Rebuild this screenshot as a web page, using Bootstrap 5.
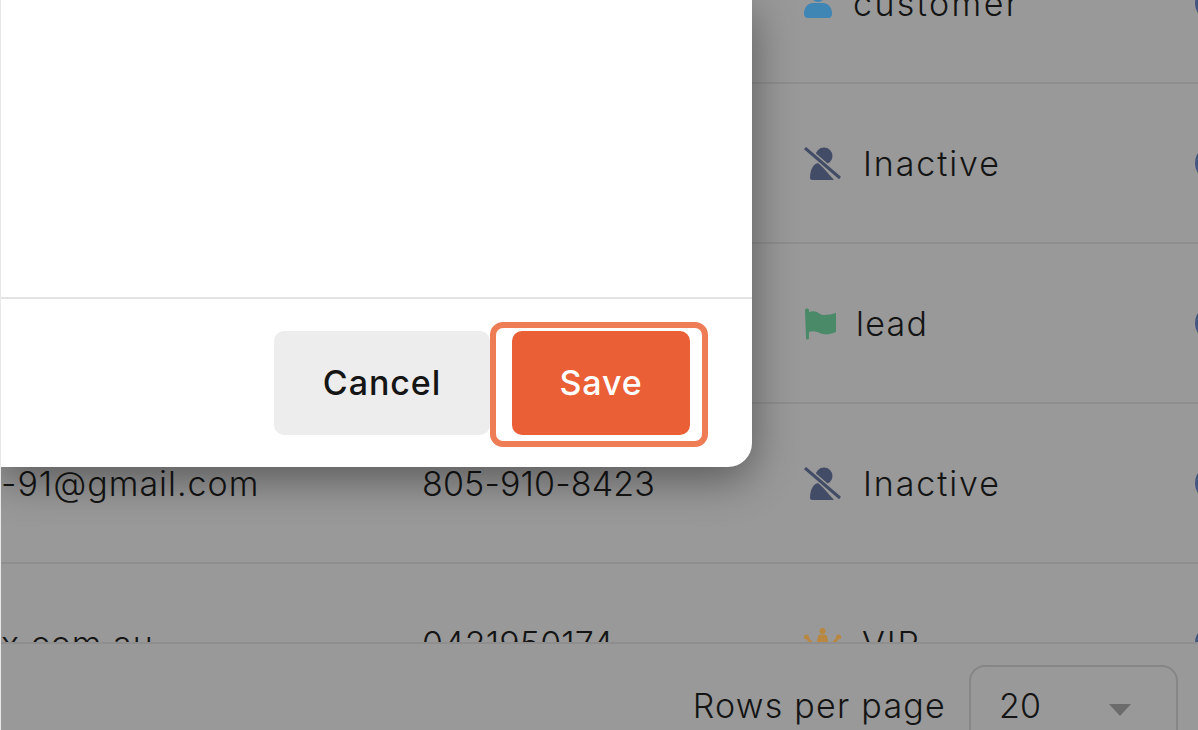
<!DOCTYPE html>
<html lang="en">
<head>
    <meta charset="UTF-8">
    <meta name="viewport" content="width=device-width, initial-scale=1.0">
    <title>Customers</title>
    <link href="https://cdn.jsdelivr.net/npm/bootstrap@5.3.0/dist/css/bootstrap.min.css" rel="stylesheet">
    <style>
        html, body { height: 730px; overflow: hidden; background: #f4f4f4; }
        body { font-family: Inter, "Open Sans", sans-serif; color: #141414; }
        .stage { position: relative; height: 730px; overflow: hidden; background: #999; border-left: 1px solid #e8e8e8; }
        .rows-area { height: 642px; overflow: hidden; }
        .rows-inner { margin-top: -76px; }
        .cust-row { display: grid; grid-template-columns: 421px 382px 391px 40px; align-items: center; height: 160px; border-bottom: 2px solid #8e8e8e; font-size: 34px; font-weight: 300; letter-spacing: 1px; width: 1240px; }
        .cell-text { padding-top: 1px; }
        .phone-cell { letter-spacing: .15px; }
        .status-cell { display: flex; align-items: center; gap: 21px; letter-spacing: 1.9px; }
        .status-cell svg { flex: none; }
        .status-wide { letter-spacing: 2.4px; }
        .status-tight { gap: 20px; letter-spacing: 1.3px; }
        .dot-blue { width: 36px; height: 36px; border-radius: 50%; background: #42567f; }
        .pager-bar { height: 88px; border-top: 2px solid #8e8e8e; font-size: 34px; font-weight: 300; letter-spacing: 1.25px; padding-right: 20px; padding-top: 21px; }
        .pager-label { margin-top: 19px; line-height: 44px; }
        .rows-select { width: 209px; height: 90px; margin-left: 23px; border: 2px solid #868686; border-radius: 16px; padding: 17px 28px; letter-spacing: .15px; line-height: 44px; }
        .caret-down { width: 0; height: 0; border-left: 11px solid transparent; border-right: 11px solid transparent; border-top: 12px solid #6c6c6c; margin: 20px 17px 0 0; }
        .dlg { position: absolute; left: 0; top: 0; width: 751px; height: 467px; background: #fff; border-radius: 0 0 24px 0; box-shadow: 0 12px 44px rgba(0,0,0,.42); }
        .dlg-body { height: 299px; border-bottom: 2px solid #e3e3e3; }
        .dlg-foot { padding: 32px 62px 0 0; gap: 22px; }
        .act-btn { height: 104px; border: 0; border-radius: 10px; padding-top: 5px; font-size: 34px; font-weight: 500; letter-spacing: .9px; }
        .act-cancel { width: 216px; background: #ededed; color: #151515; }
        .act-save { position: relative; width: 178px; background: #ea5f35; color: #fff; }
        .act-cancel:hover { background: #ededed; color: #151515; }
        .act-save:hover { background: #ea5f35; color: #fff; }
        .save-ring { position: absolute; left: -22px; right: -18px; top: -9px; bottom: -12px; border: 6px solid #ee7c55; border-radius: 13px; }
    </style>
</head>
<body>
    <div class="stage">
        <!-- dimmed table behind the dialog -->
        <div class="rows-area">
            <div class="rows-inner">
                <div class="cust-row">
                    <span></span><span></span>
                    <span class="status-cell status-wide">
                        <svg width="28" height="30" viewBox="0 0 28 30"><circle cx="14" cy="7" r="7" fill="#3f86b5"/><path d="M0 26c0-7 4-11 9-11h10c5 0 9 4 9 11 0 2-1 4-4 4H4c-3 0-4-2-4-4z" fill="#3f86b5"/></svg>
                        <span class="cell-text">customer</span>
                    </span>
                    <span class="dot-blue"></span>
                </div>
                <div class="cust-row">
                    <span></span><span></span>
                    <span class="status-cell">
                        <svg width="38" height="33" viewBox="0 0 38 33"><circle cx="20" cy="9" r="8.5" fill="#434c66"/><path d="M6 31c0-9 4-15 9-15l15 17H8c-1 0-2-1-2-2z" fill="#434c66"/><path d="M1 1l35 30" stroke="#999" stroke-width="6"/><path d="M1 1l35 30" stroke="#434c66" stroke-width="3"/></svg>
                        <span class="cell-text">Inactive</span>
                    </span>
                    <span class="dot-blue"></span>
                </div>
                <div class="cust-row">
                    <span></span><span></span>
                    <span class="status-cell status-tight">
                        <svg width="32" height="33" viewBox="0 0 32 33"><path d="M1 3c0-2 4-2 4 0v28c0 2-3 2-3 0z" fill="#4a8a68"/><path d="M5 5c8-3 10 3 15 3 4 0 8-1 12-2v19c-5 2-9 3-13 2-5-1-8-4-14-2z" fill="#4a8a68"/></svg>
                        <span class="cell-text">lead</span>
                    </span>
                    <span class="dot-blue"></span>
                </div>
                <div class="cust-row">
                    <span class="cell-text">-91@gmail.com</span>
                    <span class="cell-text phone-cell">805-910-8423</span>
                    <span class="status-cell">
                        <svg width="38" height="33" viewBox="0 0 38 33"><circle cx="20" cy="9" r="8.5" fill="#434c66"/><path d="M6 31c0-9 4-15 9-15l15 17H8c-1 0-2-1-2-2z" fill="#434c66"/><path d="M1 1l35 30" stroke="#999" stroke-width="6"/><path d="M1 1l35 30" stroke="#434c66" stroke-width="3"/></svg>
                        <span class="cell-text">Inactive</span>
                    </span>
                    <span class="dot-blue"></span>
                </div>
                <div class="cust-row">
                    <span class="cell-text">x.com.au</span>
                    <span class="cell-text phone-cell">0421950174</span>
                    <span class="status-cell">
                        <svg width="37" height="30" viewBox="0 0 37 30"><circle cx="18.5" cy="3" r="3" fill="#b9873f"/><path d="M14 8c0-2 9-2 9 0l2 10H12z" fill="#b9873f"/><circle cx="2.500" cy="9" r="2.500" fill="#b9873f"/><circle cx="34.500" cy="9" r="2.500" fill="#b9873f"/><path d="M4 11l6 7M33 11l-6 7" stroke="#b9873f" stroke-width="3"/><path d="M6 20h25l-2 8H8z" fill="#b9873f"/></svg>
                        <span class="cell-text">VIP</span>
                    </span>
                    <span class="dot-blue"></span>
                </div>
            </div>
        </div>
        <div class="pager-bar d-flex justify-content-end">
            <span class="pager-label">Rows per page</span>
            <div class="rows-select d-flex justify-content-between align-items-start">
                <span>20</span>
                <span class="caret-down"></span>
            </div>
        </div>

        <!-- dialog -->
        <div class="dlg">
            <div class="dlg-body"></div>
            <div class="dlg-foot d-flex justify-content-end">
                <button type="button" class="btn act-btn act-cancel">Cancel</button>
                <button type="button" class="btn act-btn act-save">Save<span class="save-ring"></span></button>
            </div>
        </div>
    </div>
    <script src="https://cdn.jsdelivr.net/npm/bootstrap@5.3.0/dist/js/bootstrap.bundle.min.js"></script>
</body>
</html>
